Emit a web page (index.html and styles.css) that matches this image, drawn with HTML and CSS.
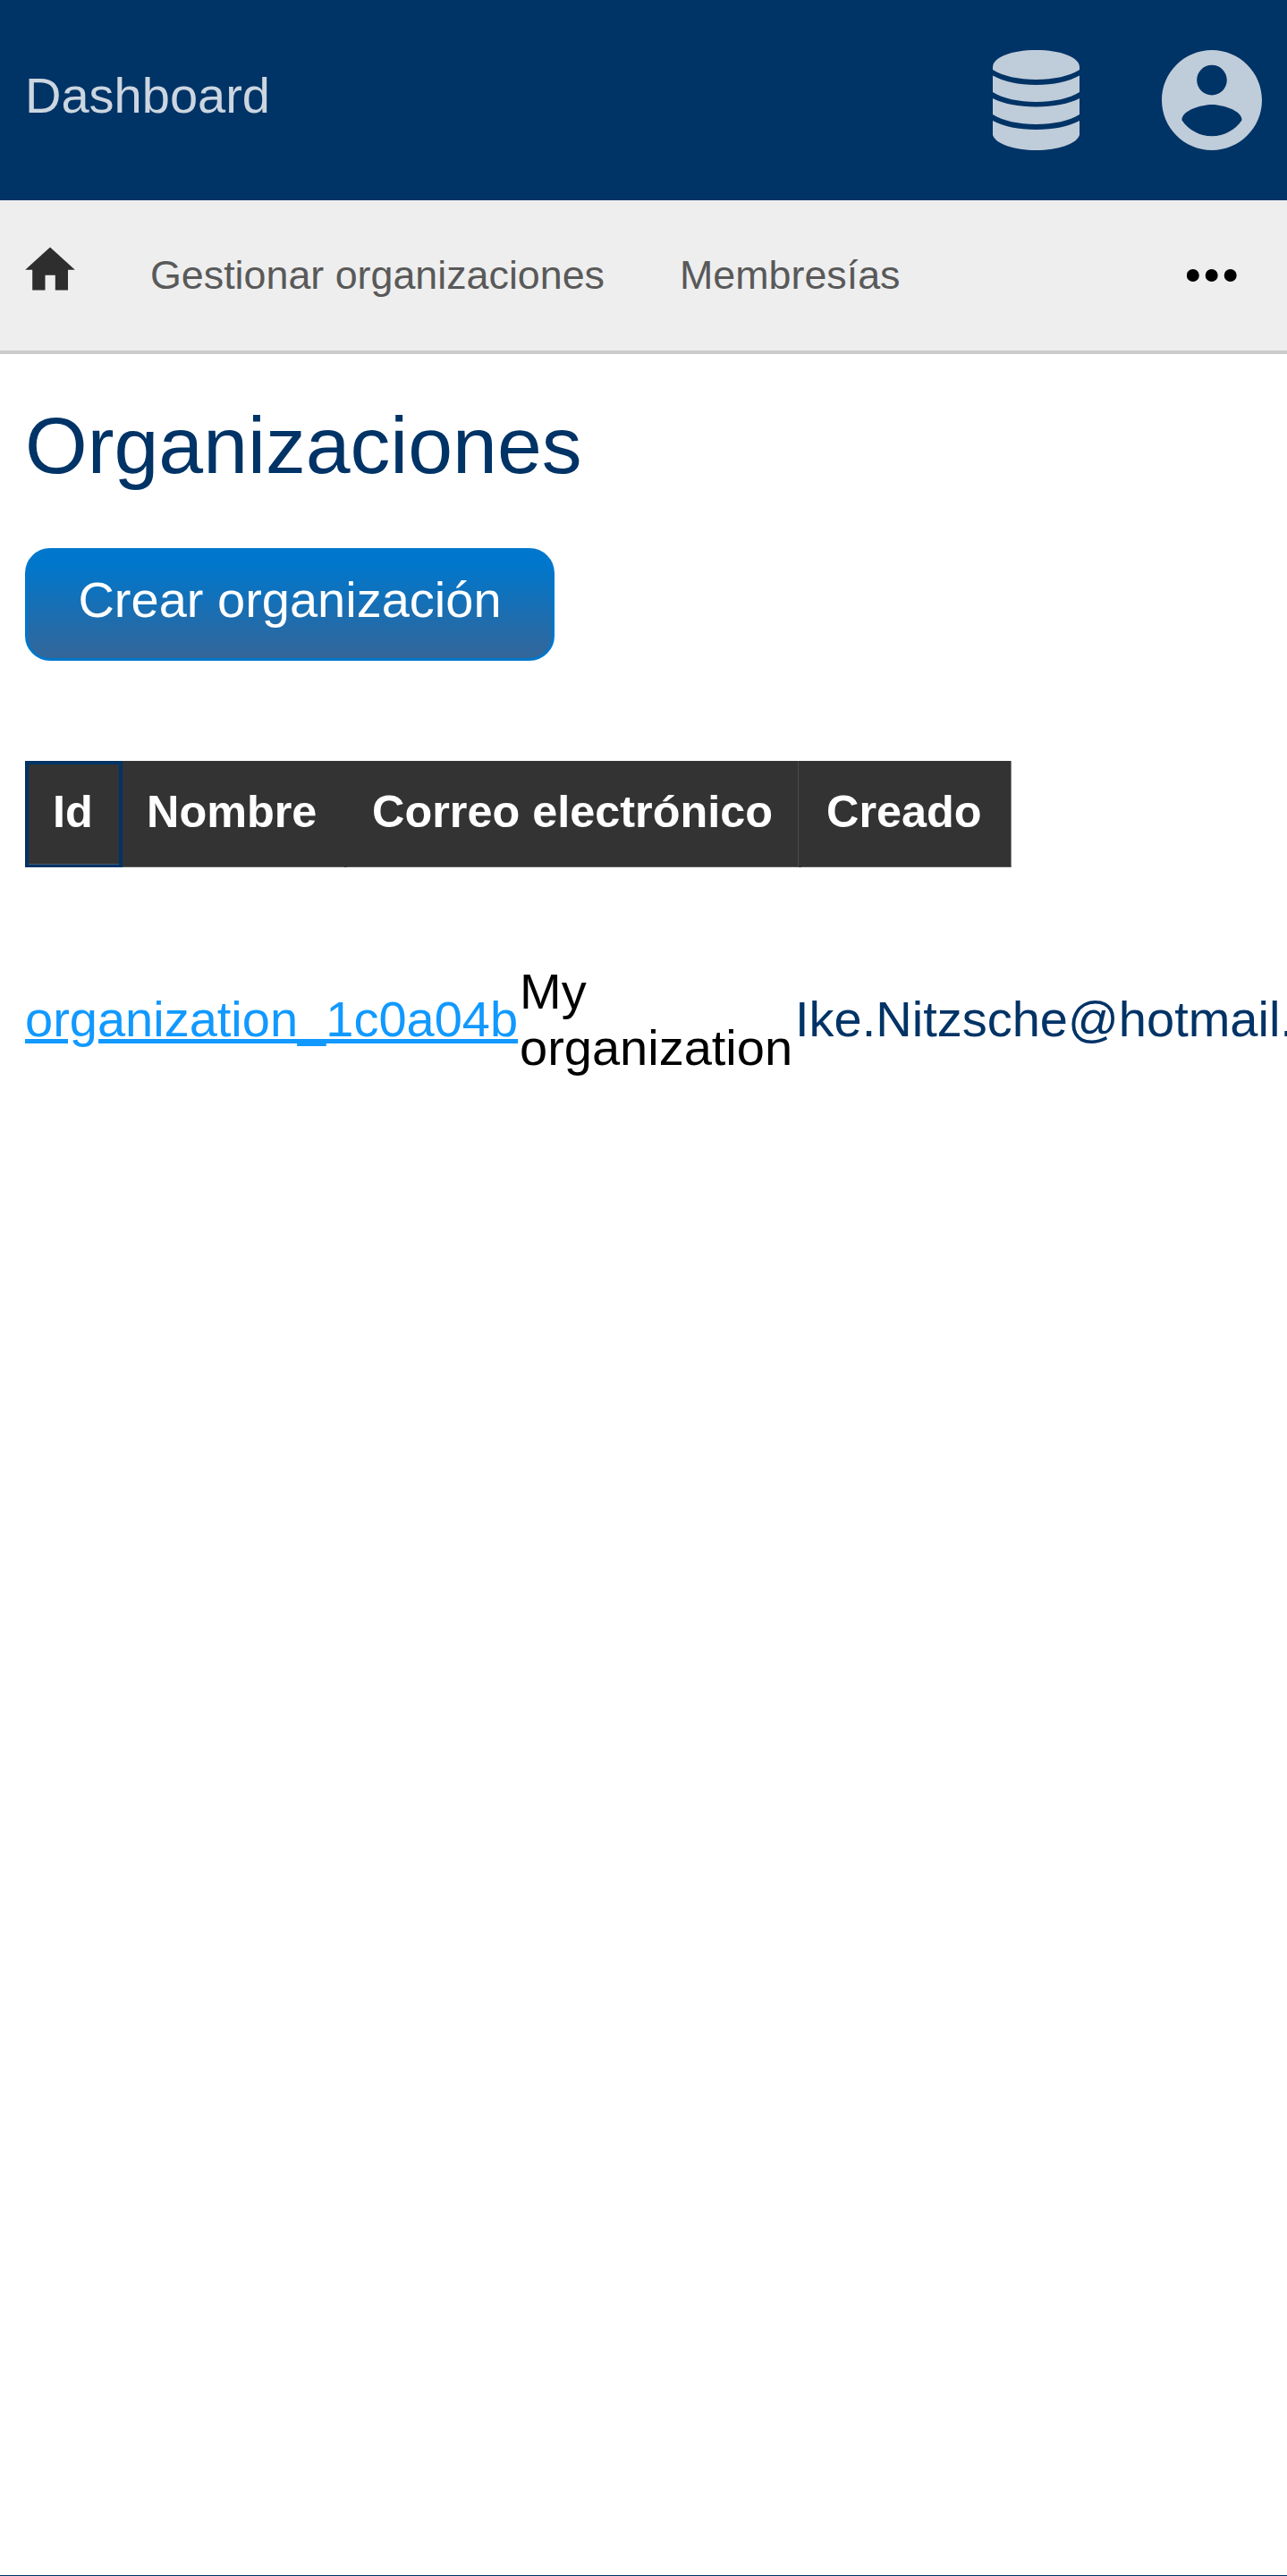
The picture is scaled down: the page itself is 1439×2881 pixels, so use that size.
FILE: index.html
```html
<!DOCTYPE html>
<html lang="es">
<head>
<meta charset="utf-8">
<title>Organizaciones</title>
<link rel="stylesheet" href="styles.css">
</head>
<body>
<header class="topbar">
  <a class="brand">Dashboard</a>
  <svg class="icon-db" viewBox="0 0 97 112">
    <path d="M0 19C0 8 21 0 48.500 0S97 8 97 19V22C86 29 68 33 48.500 33S11 29 0 22Z"/>
    <path d="M0 28.500C12 35 29 39 48.500 39S85 35 97 28.500V47C86 54 68 58 48.500 58S11 54 0 47Z"/>
    <path d="M0 54C12 60 29 63.500 48.500 63.500S85 60 97 54V72C86 79 68 83 48.500 83S11 79 0 72Z"/>
    <path d="M0 79C12 85.500 29 89 48.500 89S85 85.500 97 79V95C94 105 73 112 48.500 112S3 105 0 95Z"/>
  </svg>
  <svg class="icon-user" viewBox="2 2 20 20">
    <path d="M12 2C6.480 2 2 6.480 2 12s4.480 10 10 10 10-4.480 10-10S17.520 2 12 2zm0 3c1.660 0 3 1.340 3 3s-1.340 3-3 3-3-1.340-3-3 1.340-3 3-3zm0 14.200c-2.500 0-4.710-1.280-6-3.220.030-1.990 4-3.080 6-3.080 1.990 0 5.970 1.090 6 3.080-1.290 1.940-3.500 3.220-6 3.220z"/>
  </svg>
</header>
<nav class="nav">
  <svg class="icon-home" viewBox="0 0 56 49"><path d="M28 .500L.200 25.700H8.200V48.500H22.500V31.800H33.800V48.500H48V25.700H55.800Z"/></svg>
  <a class="nav-link">Gestionar organizaciones</a>
  <a class="nav-link">Membresías</a>
  <svg class="icon-more" viewBox="0 0 56 14"><circle cx="6.800" cy="7" r="7"/><circle cx="27.700" cy="7" r="7"/><circle cx="48.700" cy="7" r="7"/></svg>
</nav>
<main class="content">
  <h1 class="title">Organizaciones</h1>
  <button class="create">Crear organización</button>
  <div class="table-head">
    <div class="th th-active">Id</div>
    <div class="th th-name">Nombre</div>
    <div class="th th-divided">Correo electrónico</div>
    <div class="th th-last">Creado</div>
  </div>
  <div class="row">
    <a class="org-id">organization_1c0a04b</a>
    <span class="org-name">My organization</span>
    <span class="org-mail">Ike.Nitzsche@hotmail.com</span>
  </div>
</main>
<footer class="footer"></footer>
</body>
</html>
```
FILE: styles.css
```css
* { box-sizing: border-box; }

body {
  margin: 0;
  height: 2881px;
  display: flex;
  flex-direction: column;
  overflow: hidden;
  background: #fff;
  color: #000;
  font: 56px/63px "Liberation Sans", Arial, sans-serif;
}

.topbar {
  display: flex;
  flex: none;
  align-items: center;
  height: 224px;
  padding: 0 28px;
  background: #003366;
}
.brand { margin: 0 auto 11px 0; color: #ccd6e0; }
.icon-db { width: 97px; height: 112px; margin-right: 92px; fill: #bfccd9; }
.icon-user { width: 112px; height: 112px; fill: #bfccd9; }

.nav {
  display: flex;
  flex: none;
  align-items: center;
  height: 172px;
  padding: 0 56px 0 28px;
  border-bottom: 4px solid #ccc;
  background: #eee;
  font-size: 44.8px;
  line-height: 52px;
}
.icon-home { width: 56px; height: 49px; margin: 0 84px 15px 0; fill: #2e2e2e; }
.nav-link { margin: 0 84px 3px 0; color: #595959; }
.icon-more { width: 56px; height: 14px; margin-left: auto; fill: #000; }

.content { flex: 1; padding: 51px 0 0 28px; overflow: hidden; }

.title {
  margin: 0;
  color: #003366;
  font-size: 89.6px;
  font-weight: 400;
  line-height: 102px;
}
.create {
  display: block;
  width: 592px;
  height: 126px;
  margin-top: 64px;
  padding: 0 0 11px;
  border: 3px solid #0077cc;
  border-radius: 28px;
  background: linear-gradient(#0077cc 12%, #336699);
  color: #fff;
  font: inherit;
}

.table-head {
  display: grid;
  grid-template-columns: 109px 251px 505px 238px;
  width: 1103px;
  height: 119px;
  margin-top: 112px;
  border-bottom: 3px solid #333;
  background: #333;
  color: #fff;
  font-size: 50.4px;
  font-weight: 700;
  line-height: 58px;
}
.th { padding: 28px 0 0 28px; border-bottom: 1px solid #5c5c5c; white-space: nowrap; }
.th-active {
  height: 119px;
  padding: 24px 0 0 27px;
  border: 4px solid #003366;
  border-bottom-width: 3px;
  box-shadow: inset 0 -1px #4a5c6e;
}
.th-name { margin-right: 3px; padding-left: 27px; }
.th-divided { border-right: 1px solid #4a4a4a; }
.th-last { margin-left: 3px; border-right: 1px solid #858585; }

.row {
  display: flex;
  align-items: center;
  gap: 3px;
  margin-top: 107px;
}
.org-id { flex: none; width: 550px; margin-bottom: 1px; color: #1199ff; text-decoration: underline; }
.org-name { flex: none; width: 305px; }
.org-mail { flex: none; margin-bottom: 1px; color: #003366; }

.footer { flex: none; height: 1px; background: #003366; }
```
